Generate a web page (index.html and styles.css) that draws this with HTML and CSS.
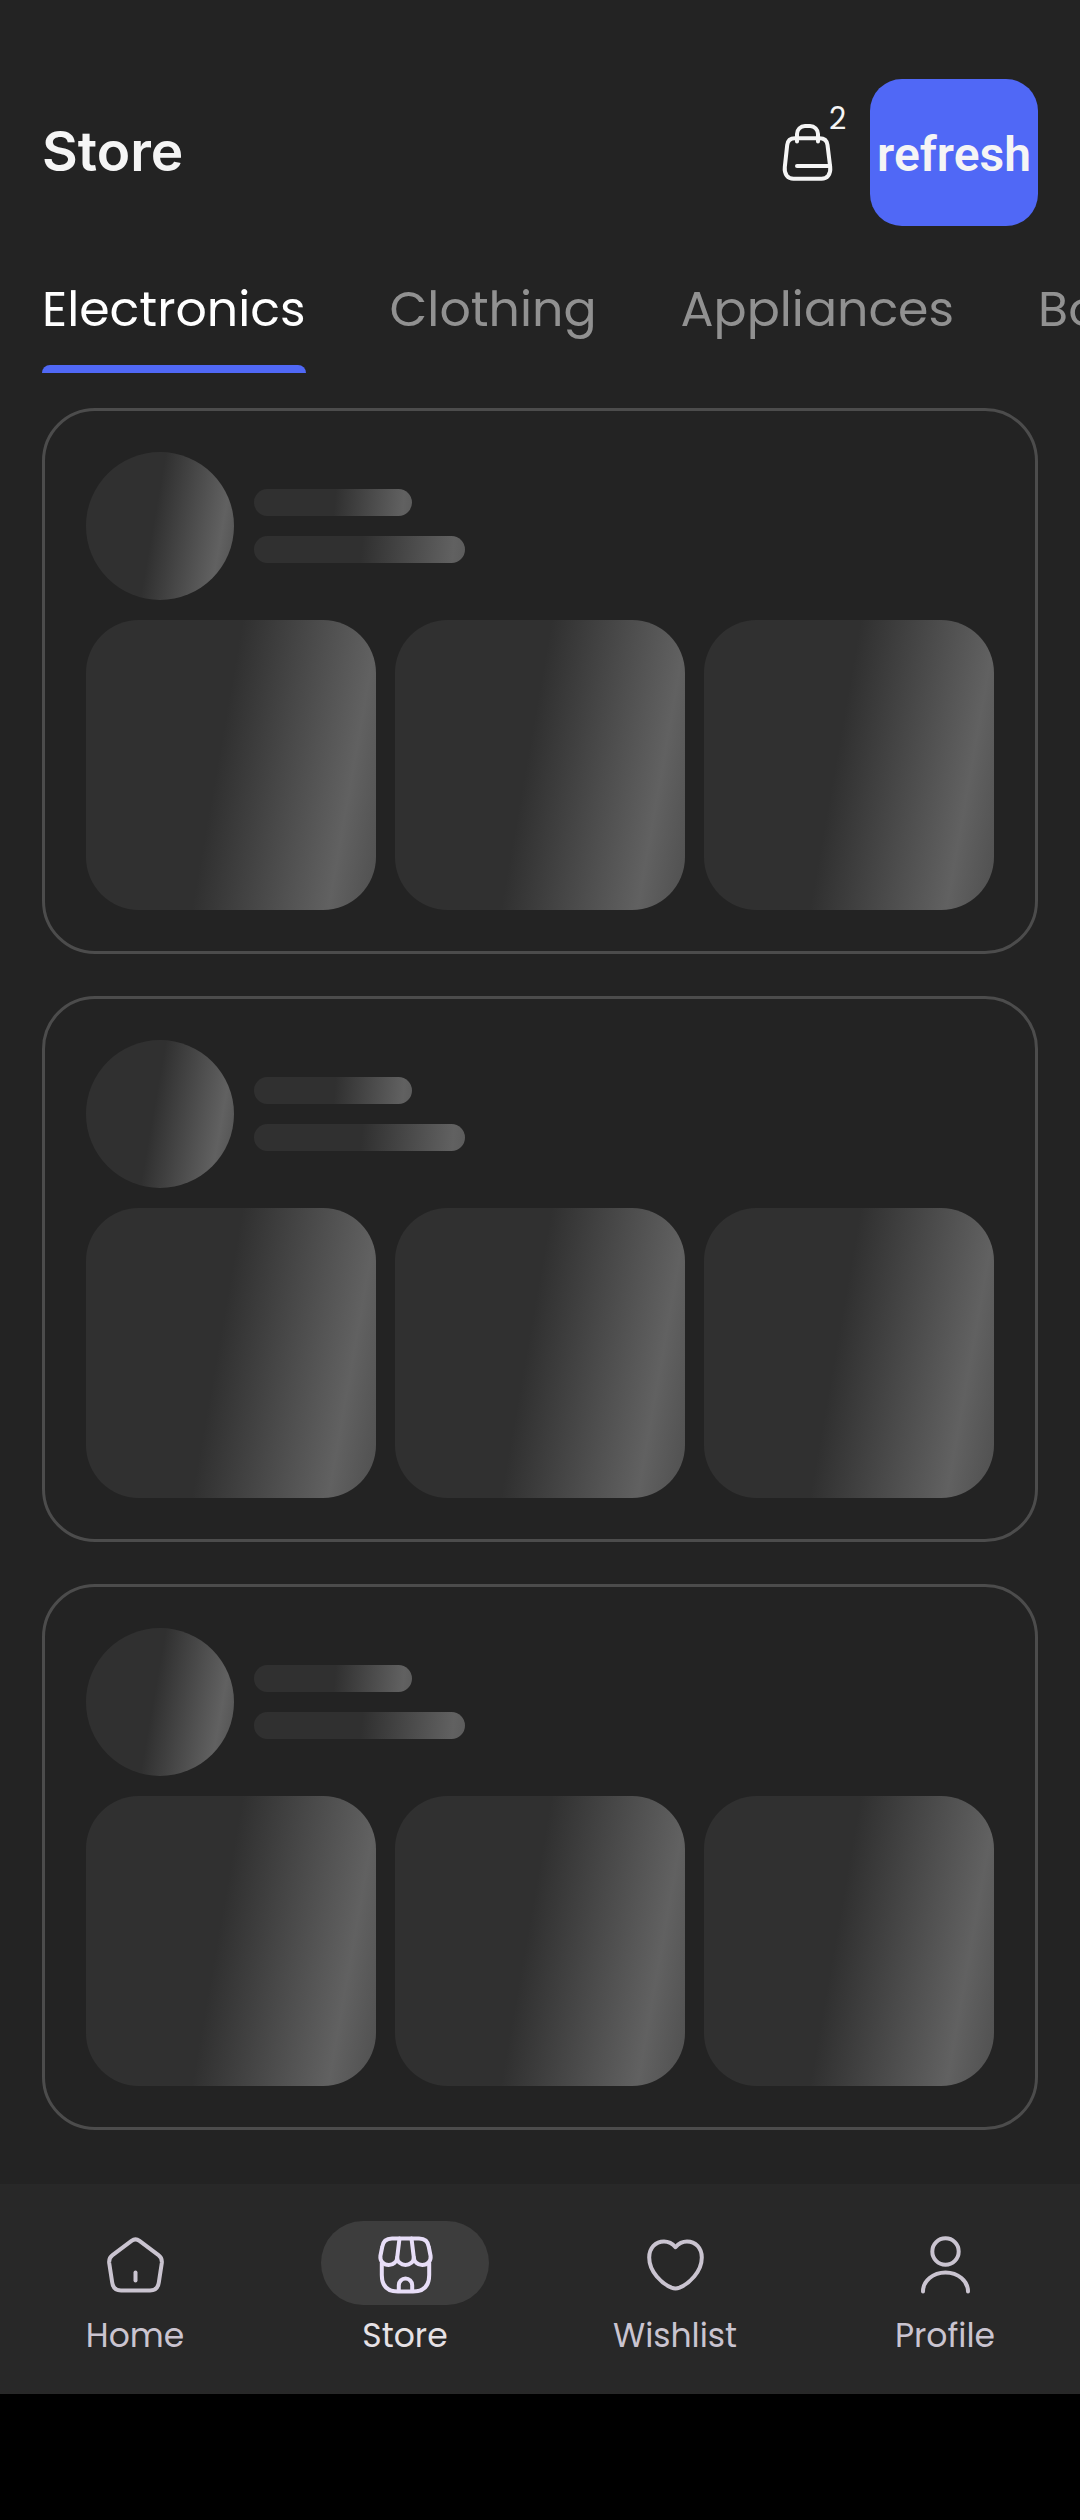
FILE: index.html
```html
<!DOCTYPE html>
<html lang="en">
<head>
  <meta charset="utf-8">
  <meta name="viewport" content="width=device-width, initial-scale=1">
  <title>Store</title>
  <link rel="stylesheet" href="styles.css">
</head>
<body>
  <header class="topbar">
    <h1 class="title">Store</h1>
    <button class="cart" type="button" aria-label="Cart, 2 items">
      <svg class="icon" viewBox="0 0 63 63" aria-hidden="true">
        <path d="M21 20.5V13a8 8 0 0 1 8-8h5a8 8 0 0 1 8 8v7.5"/>
        <path d="M19 17.3H43.5C48.5 17.3 51 20 51.5 24L54.2 46C55 53.5 51 57.7 45.5 57.7H17.5C12 57.7 8 53.5 8.8 46L11.2 24C11.7 20 14 17.3 19 17.3Z"/>
        <path d="M21 45H54"/>
      </svg>
      <span class="badge">2</span>
    </button>
    <button class="refresh" type="button">refresh</button>
  </header>

  <nav class="tabs" aria-label="Categories">
    <a class="tab tab-active" href="#electronics" aria-current="true">Electronics</a>
    <a class="tab" href="#clothing">Clothing</a>
    <a class="tab" href="#appliances">Appliances</a>
    <a class="tab" href="#books">Books</a>
  </nav>

  <main class="cards" aria-busy="true">
    <section class="card">
      <div class="card-head">
        <div class="avatar bone"></div>
        <div class="lines">
          <div class="line bone"></div>
          <div class="line line-long bone"></div>
        </div>
      </div>
      <div class="tiles">
        <div class="tile bone"></div>
        <div class="tile bone"></div>
        <div class="tile bone"></div>
      </div>
    </section>
    <section class="card">
      <div class="card-head">
        <div class="avatar bone"></div>
        <div class="lines">
          <div class="line bone"></div>
          <div class="line line-long bone"></div>
        </div>
      </div>
      <div class="tiles">
        <div class="tile bone"></div>
        <div class="tile bone"></div>
        <div class="tile bone"></div>
      </div>
    </section>
    <section class="card">
      <div class="card-head">
        <div class="avatar bone"></div>
        <div class="lines">
          <div class="line bone"></div>
          <div class="line line-long bone"></div>
        </div>
      </div>
      <div class="tiles">
        <div class="tile bone"></div>
        <div class="tile bone"></div>
        <div class="tile bone"></div>
      </div>
    </section>
  </main>

  <nav class="bottom-nav" aria-label="Main">
    <a class="nav-item" href="#home">
      <span class="pill">
        <svg class="icon" viewBox="0 0 63 63" aria-hidden="true">
          <path d="M27.5 8.8L8.5 23.2Q4.7 26 5.2 31L8.2 50.5Q9.4 58.5 17 58.5H46Q53.6 58.5 54.8 50.5L57.8 31Q58.3 26 54.5 23.2L35.5 8.8Q31.5 5.9 27.5 8.8Z"/>
          <path d="M31.5 40.5V48.5"/>
        </svg>
      </span>
      <span>Home</span>
    </a>
    <a class="nav-item nav-active" href="#store" aria-current="page">
      <span class="pill">
        <svg class="icon" viewBox="0 0 63 63" aria-hidden="true">
          <path d="M18 6.5H45C51 6.5 54 9 54.8 15L56.6 24C57.2 29 53.5 33 48.2 33C43.5 33 40 29.5 39.8 25.5C39.8 29.8 36 33 31.5 33S23.2 29.8 23.2 25.5C23 29.5 19.5 33 14.8 33C9.5 33 5.8 29 6.4 24L8.2 15C9 9 12 6.5 18 6.5Z"/>
          <path d="M25.5 6.5L23.2 25.5M37.5 6.5L39.8 25.5"/>
          <path d="M7.8 31V43C7.8 54 13 59.5 24 59.5H39C50 59.5 55.2 54 55.2 43V31"/>
          <path d="M24.8 59V53.2a6.7 6.7 0 0 1 13.4 0V59"/>
        </svg>
      </span>
      <span>Store</span>
    </a>
    <a class="nav-item" href="#wishlist">
      <span class="pill">
        <svg class="icon" viewBox="0 0 63 63" aria-hidden="true">
          <path d="M31.5 15.2C28.5 11.7 24.5 9.5 20 9.5C11.5 9.5 5.2 16 5.2 25.5C5.2 40 18 51.5 27.5 55.7Q31.5 57.3 35.5 55.7C45 51.5 57.8 40 57.8 25.5C57.8 16 51.5 9.5 43 9.5C38.5 9.5 34.5 11.7 31.5 15.2Z"/>
        </svg>
      </span>
      <span>Wishlist</span>
    </a>
    <a class="nav-item" href="#profile">
      <span class="pill">
        <svg class="icon" viewBox="0 0 63 63" aria-hidden="true">
          <circle cx="31.5" cy="19.5" r="13.2"/>
          <path d="M9 59.5C9 49 19 40.5 31.5 40.5S54 49 54 59.5"/>
        </svg>
      </span>
      <span>Profile</span>
    </a>
  </nav>
  <div class="system-bar"></div>
</body>
</html>
```

FILE: styles.css
```css
* {
  box-sizing: border-box;
}

body {
  margin: 0;
  min-height: 100vh;
  display: flex;
  flex-direction: column;
  background: #232323;
  color: #f5f5f5;
  font-family: Poppins, Inter, sans-serif;
}

button {
  border: 0;
  padding: 0;
  background: none;
  color: inherit;
  font: inherit;
  cursor: pointer;
}

a {
  color: inherit;
  text-decoration: none;
}

.icon {
  display: block;
  width: 63px;
  height: 63px;
  fill: none;
  stroke: currentColor;
  stroke-width: 4;
  stroke-linecap: round;
  stroke-linejoin: round;
}

/* Top bar */

.topbar {
  display: flex;
  align-items: center;
  gap: 31px;
  padding: 79px 42px 0;
}

.title {
  flex: 1;
  margin: 0;
  padding-bottom: 4px;
  font-family: Inter, sans-serif;
  font-size: 55px;
  font-weight: 600;
  line-height: 64px;
}

.cart {
  position: relative;
}

.badge {
  position: absolute;
  left: 53px;
  top: -20px;
  font-size: 30px;
  line-height: 36px;
}

.refresh {
  width: 168px;
  height: 147px;
  padding-top: 4px;
  border-radius: 32px;
  background: #5068f6;
  font-family: Roboto, sans-serif;
  font-size: 48px;
  font-weight: 600;
}

/* Category tabs */

.tabs {
  display: flex;
  gap: 84px;
  height: 147px;
  padding: 0 42px;
  overflow: hidden;
}

.tab {
  flex: none;
  display: flex;
  align-items: flex-end;
  padding-bottom: 24px;
  border-bottom: 8px solid transparent;
  font-size: 49px;
  line-height: 64px;
  color: #919191;
}

.tab-active {
  position: relative;
  color: #fff;
}

.tab-active::after {
  content: "";
  position: absolute;
  left: 0;
  right: 0;
  bottom: -8px;
  height: 8px;
  border-radius: 8px 8px 0 0;
  background: #5068f6;
}

/* Loading cards */

.cards {
  flex: 1;
  display: flex;
  flex-direction: column;
  gap: 42px;
  padding: 35px 42px 54px;
}

.card {
  display: flex;
  flex-direction: column;
  gap: 20px;
  padding: 41px;
  border: 3px solid #4c4c4c;
  border-radius: 53px;
}

.card-head {
  display: flex;
  align-items: center;
  gap: 20px;
}

.bone {
  background: linear-gradient(100deg, #303030 46%, #616161 86%, #4f4f4f 100%);
}

.avatar {
  width: 148px;
  height: 148px;
  border-radius: 50%;
}

.lines {
  display: flex;
  flex-direction: column;
  gap: 20px;
}

.line {
  width: 158px;
  height: 27px;
  border-radius: 14px;
  background: linear-gradient(95deg, #303030 51%, #616161 94%, #5c5c5c 100%);
}

.line-long {
  width: 211px;
}

.tiles {
  display: grid;
  grid-template-columns: repeat(3, 1fr);
  gap: 19px;
}

.tile {
  aspect-ratio: 1;
  border-radius: 53px;
}

/* Bottom navigation */

.bottom-nav {
  display: grid;
  grid-template-columns: repeat(4, 1fr);
  height: 210px;
  padding-top: 37px;
  background: #282828;
}

.nav-item {
  display: flex;
  flex-direction: column;
  align-items: center;
  gap: 10px;
  font-size: 33px;
  line-height: 42px;
  color: #cac4d0;
}

.pill {
  display: flex;
  align-items: center;
  justify-content: center;
  width: 168px;
  height: 84px;
  border-radius: 42px;
}

.nav-active {
  color: #e6e1e5;
}

.nav-active .pill {
  background: #3d3d3d;
  color: #e8def8;
}

.system-bar {
  height: 126px;
  background: #000;
}
```
